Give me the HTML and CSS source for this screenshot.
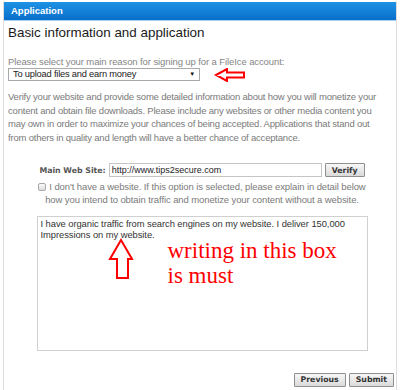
FILE: index.html
```html
<!DOCTYPE html>
<html>
<head>
<meta charset="utf-8">
<link rel="stylesheet" href="styles.css">
</head>
<body>
<div class="frame">
  <div class="header">Application</div>
  <div class="panel">
    <h1 class="title">Basic information and application</h1>
    <p class="label">Please select your main reason for signing up for a FileIce account:</p>
    <div class="select-row">
      <div class="select"><span>To upload files and earn money</span><span class="caret">&#9660;</span></div>
      <svg class="arrow-left" width="32" height="14" viewBox="0 0 32 14"><path d="M2 7 L13 1 L13 4.5 L30 4.5 L30 9.5 L13 9.5 L13 13 Z" fill="none" stroke="#ff0000" stroke-width="2"/></svg>
    </div>
    <p class="desc">Verify your website and provide some detailed information about how you will monetize your content and obtain file downloads. Please include any websites or other media content you may own in order to maximize your chances of being accepted. Applications that stand out from others in quality and length will have a better chance of acceptance.</p>
    <div class="site-row">
      <span class="site-label">Main Web Site:</span>
      <div class="input">http://www.tips2secure.com</div>
      <button class="btn">Verify</button>
    </div>
    <div class="check-row">
      <span class="checkbox"></span>I don't have a website. If this option is selected, please explain in detail below how you intend to obtain traffic and monetize your content without a website.
    </div>
    <div class="textarea">
      <div class="ta-line">I have organic traffic from search engines on my website. I deliver 150,000</div>
      <div class="ta-line short">Impressions on my website.</div>
      <svg class="arrow-up" width="26" height="43" viewBox="0 0 26 43"><path d="M13 2 L24 21 L20 21 L20 40 L9 40 L9 21 L2 21 Z" fill="none" stroke="#ff0000" stroke-width="2"/></svg>
      <div class="note">writing in this box<br>is must</div>
    </div>
    <div class="actions">
      <button class="btn">Previous</button>
      <button class="btn">Submit</button>
    </div>
  </div>
</div>
</body>
</html>
```
FILE: styles.css
```css
* { box-sizing: border-box; }
html, body { margin: 0; padding: 0; background: #fff; }
body { width: 400px; height: 390px; overflow: hidden; font-family: "Liberation Sans", Arial, sans-serif; }
.frame {
  margin: 2px 3px 0 3px;
  border-left: 1px solid #dcdcdc;
  border-right: 1px solid #dcdcdc;
  height: 388px;
}
.header {
  height: 19px;
  background: linear-gradient(#1e93e4, #0a6ecb);
  color: #fff;
  font-weight: bold;
  font-size: 9.5px;
  line-height: 18px;
  padding-left: 7px;
  border-bottom: 1px solid #a9d2f2;
}
.panel { padding: 0 0 0 4px; }
.title {
  margin: 4px 0 0 0;
  font-weight: normal;
  font-size: 13.4px;
  line-height: 16px;
  color: #1a1a1a;
}
.label {
  margin: 15px 0 0 0;
  font-size: 9.5px;
  letter-spacing: -0.1px;
  line-height: 12px;
  color: #858585;
}
.select-row { display: flex; align-items: center; height: 13px; }
.select {
  width: 192px;
  height: 13px;
  border: 1px solid #a9a9a9;
  font-size: 9.3px;
  letter-spacing: -0.2px;
  line-height: 11px;
  color: #222;
  padding: 0 4px;
  display: flex;
  justify-content: space-between;
}
.caret { font-size: 6px; color: #111; }
.arrow-left { margin-left: 14px; flex: none; }
.desc {
  margin: 9px 0 0 0;
  width: 378px;
  font-size: 9.5px;
  letter-spacing: -0.2px;
  line-height: 13.7px;
  color: #7a7a7a;
}
.site-row {
  display: flex;
  align-items: center;
  justify-content: center;
  margin-top: 18px;
  height: 15px;
}
.site-label {
  font-family: "DejaVu Sans", Verdana, sans-serif;
  font-weight: bold;
  font-size: 7.8px;
  color: #555;
  margin-right: 3px;
}
.input {
  width: 213px;
  height: 14px;
  border: 1px solid #c4c4c4;
  font-size: 9px;
  line-height: 12px;
  padding-left: 2px;
  color: #222;
}
.btn {
  font-family: "DejaVu Sans", Verdana, sans-serif;
  font-weight: bold;
  font-size: 7.8px;
  color: #333;
  height: 14px;
  padding: 0 6px;
  line-height: 11px;
  background: linear-gradient(#f7f7f7, #dadada);
  border: 1px solid #8f8f8f;
  border-radius: 1px;
  margin: 0 0 0 3px;
}
.check-row {
  margin: 2px auto 0 auto;
  width: 336px;
  text-align: center;
  font-size: 9.5px;
  letter-spacing: -0.1px;
  line-height: 13px;
  color: #7a7a7a;
}
.checkbox {
  display: inline-block;
  width: 8px;
  height: 8px;
  border: 1px solid #a8a8a8;
  border-radius: 2px;
  background: linear-gradient(#fafafa, #dedede);
  margin-right: 3px;
  vertical-align: -1px;
}
.textarea {
  position: relative;
  margin: 10px auto 0 auto;
  width: 331px;
  height: 135px;
  border: 1px solid #d0d0d0;
  padding: 1px 3px;
  font-size: 9.4px;
  line-height: 11px;
}
.ta-line { letter-spacing: -0.06px; color: #333; white-space: nowrap; width: max-content; }
.arrow-up { position: absolute; left: 70px; top: 21px; }
.note {
  position: absolute;
  left: 130px;
  top: 21px;
  font-family: "Liberation Serif", "Times New Roman", serif;
  font-size: 23px;
  line-height: 25px;
  color: #ff0000;
  white-space: nowrap;
}
.actions {
  display: flex;
  justify-content: flex-end;
  margin-top: 22px;
  margin-right: 2px;
}
```
